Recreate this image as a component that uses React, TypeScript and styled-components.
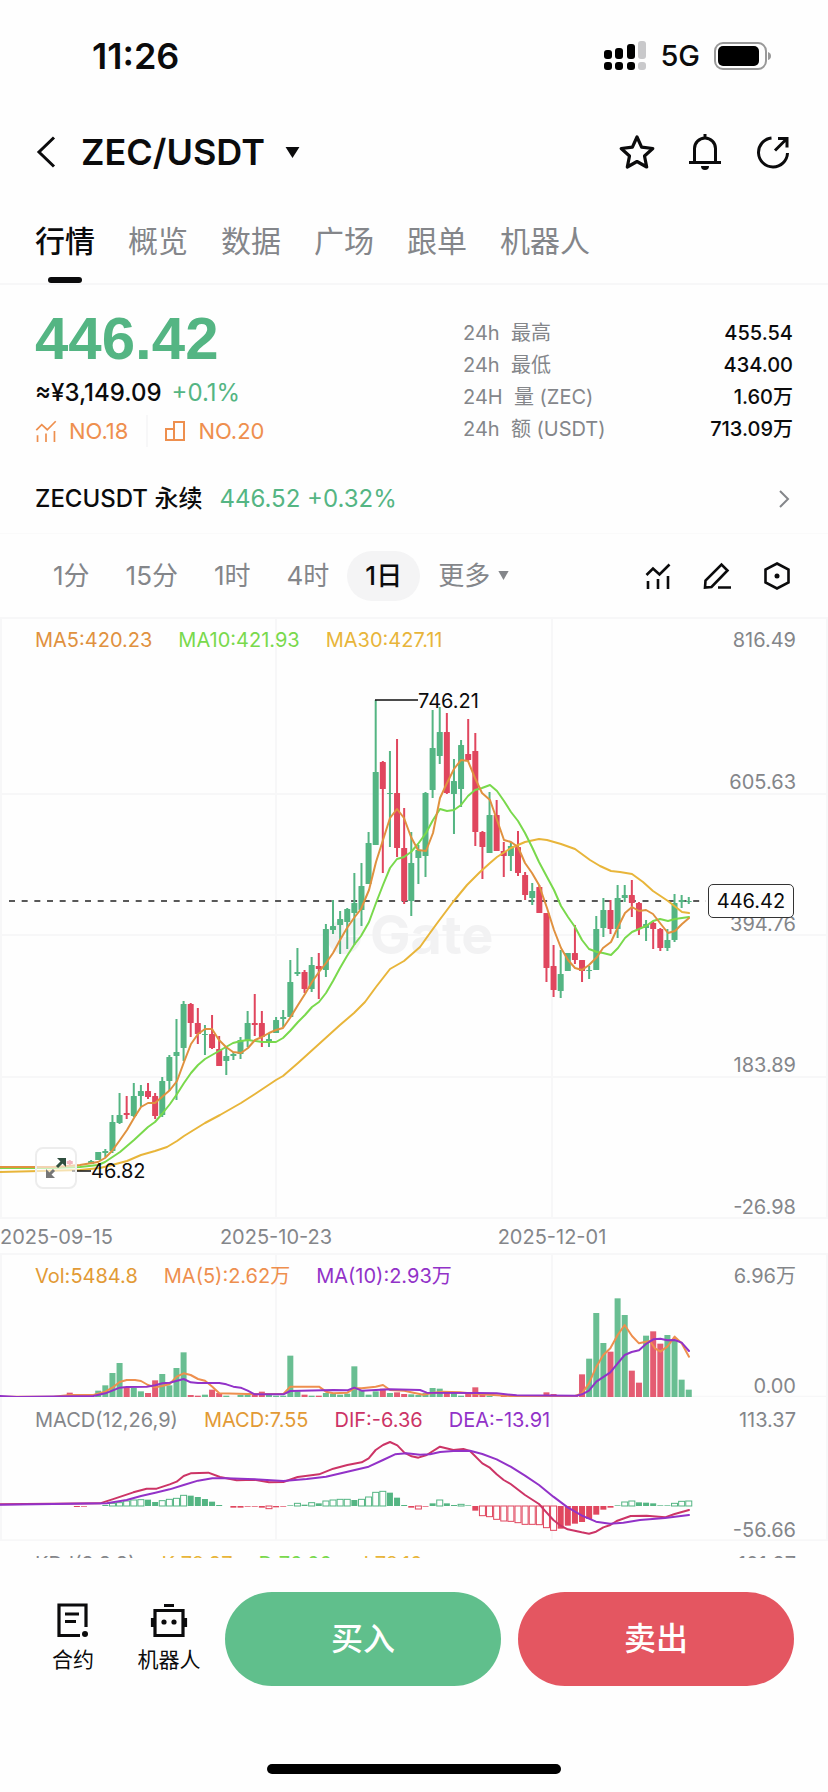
import React from "react";
import styled, { createGlobalStyle } from "styled-components";

const c = {
  ink: "#0b0b0c",
  muted: "#84868a",
  faint: "#f7f7f8",
  up: "#54b583",
  down: "#e0465e",
  orange: "#ee8f4e",
  ma5: "#e0913f",
  ma10: "#79d94c",
  ma30: "#e8b53a",
  vol: "#e29a35",
  dif: "#cc3466",
  dea: "#9232c8",
};

const GlobalStyle = createGlobalStyle`
  * { box-sizing: border-box; }
  body { margin: 0; background: #fefefe; color: ${c.ink};
    font-family: Inter, "Noto Sans CJK SC", "Liberation Sans", sans-serif; font-size: 20px; line-height: 32px; }
  button { font: inherit; color: inherit; background: none; border: 0; padding: 0; cursor: pointer; }
  a { color: inherit; text-decoration: none; }
  svg { display: block; flex: none; }
`;

const Page = styled.div`
  display: flex;
  flex-direction: column;
  min-height: 100vh;
`;

const StatusBar = styled.div`
  display: flex;
  align-items: center;
  justify-content: space-between;
  height: 112px;
  padding: 0 56px 0 92px;
`;
const Clock = styled.span`
  font-size: 36px;
  font-weight: 600;
`;
const StatusIcons = styled.div`
  display: flex;
  align-items: center;
  gap: 14px;
  font-size: 29px;
  font-weight: 500;
`;

const Header = styled.header`
  display: flex;
  align-items: center;
  justify-content: space-between;
  height: 80px;
  padding: 0 36px;
`;
const PairButton = styled.button`
  display: flex;
  align-items: center;
  gap: 20px;
`;
const Pair = styled.h1`
  margin: 0;
  font-size: 36px;
  line-height: 44px;
  font-weight: 600;
`;
const Group = styled.div<{ $gap: number }>`
  display: flex;
  align-items: center;
  gap: ${(p) => p.$gap}px;
`;
const IconButton = styled.button`
  display: grid;
  place-items: center;
`;

const Tabs = styled.nav`
  display: flex;
  gap: 33px;
  height: 93px;
  padding: 0 35px;
  border-bottom: 2px solid ${c.faint};
`;
const Tab = styled.a<{ $on?: boolean }>`
  display: flex;
  flex-direction: column;
  align-items: center;
  justify-content: space-between;
  padding-top: 29px;
  font-size: 30px;
  line-height: 40px;
  font-weight: ${(p) => (p.$on ? 500 : 400)};
  color: ${(p) => (p.$on ? c.ink : c.muted)};
  &::after {
    content: "";
    width: 34px;
    height: 6px;
    border-radius: 3px;
    background: ${(p) => (p.$on ? c.ink : "transparent")};
  }
`;

const Summary = styled.section`
  display: flex;
  justify-content: space-between;
  padding: 32px 35px 0;
  height: 179px;
`;
const Price = styled.div`
  font-family: "Liberation Sans", Arial, sans-serif;
  font-size: 60px;
  line-height: 44px;
  font-weight: 700;
  color: ${c.up};
`;
const Fiat = styled.div`
  display: flex;
  gap: 10px;
  margin-top: 16px;
  font-size: 24px;
  line-height: 32px;
  font-weight: 500;
`;
const Up = styled.span`
  color: ${c.up};
  font-weight: 400;
`;
const Ranks = styled.div`
  display: flex;
  align-items: center;
  margin-top: 6px;
  font-size: 22px;
  color: ${c.orange};
`;
const Rank = styled.a`
  display: flex;
  align-items: center;
  gap: 12px;
  & + & {
    margin-left: 18px;
    padding-left: 16px;
    border-left: 2px solid ${c.faint};
  }
`;
const Stats = styled.dl`
  display: grid;
  grid-template-columns: auto auto;
  justify-content: space-between;
  grid-auto-rows: 32px;
  width: 330px;
  margin: 0;
  dt { color: ${c.muted}; white-space: pre; }
  dd { margin: 0; text-align: right; font-weight: 500; }
`;

const Perp = styled.a`
  display: flex;
  align-items: center;
  height: 70px;
  padding: 0 38px 0 35px;
  font-size: 24px;
  font-weight: 500;
  border-bottom: 1px solid #fafafa;
  svg { margin-left: auto; }
  ${Up} { margin-left: 17px; }
`;

const Toolbar = styled.div`
  display: flex;
  align-items: center;
  justify-content: space-between;
  height: 83px;
  padding: 0 37px 0 35px;
`;
const Frame = styled.button<{ $on?: boolean }>`
  display: flex;
  align-items: center;
  gap: 8px;
  height: 50px;
  padding: 0 18px;
  border-radius: 25px;
  font-size: 26px;
  font-weight: ${(p) => (p.$on ? 500 : 400)};
  color: ${(p) => (p.$on ? c.ink : c.muted)};
  background: ${(p) => (p.$on ? "#f4f4f5" : "transparent")};
`;

const Panel = styled.section`
  position: relative;
  display: grid;
  > * { grid-area: 1 / 1; }
  > svg { width: 100%; height: auto; }
`;
const Overlay = styled.div`
  display: flex;
  justify-content: space-between;
  padding: 7px 32px 0 35px;
`;
const Legend = styled.div`
  display: flex;
  gap: 26px;
  height: 32px;
  white-space: nowrap;
`;
const Ink = styled.span<{ $c: string }>`
  color: ${(p) => p.$c};
`;
const Axis = styled.div<{ $end: number }>`
  display: flex;
  flex-direction: column;
  justify-content: space-between;
  text-align: right;
  color: ${c.muted};
  margin-bottom: ${(p) => p.$end}px;
`;
const PriceTag = styled.div`
  position: absolute;
  right: 34px;
  top: 44.4%;
  width: 86px;
  height: 34px;
  border: 1px solid #333;
  border-radius: 5px;
  background: #fefefe;
  text-align: center;
`;
const Expand = styled.button`
  position: absolute;
  left: 35px;
  top: 88%;
  width: 42px;
  height: 42px;
  display: grid;
  place-items: center;
  border: 2px solid #ededed;
  border-radius: 8px;
  background: rgba(255, 255, 255, 0.6);
`;
const Dates = styled.div`
  display: grid;
  grid-template-columns: 1fr 2fr 2fr 1fr;
  height: 34px;
  line-height: 36px;
  color: ${c.muted};
  text-align: center;
  white-space: nowrap;
  span:first-child { text-align: left; }
`;
const Clipped = styled.section`
  height: 17px;
  overflow: hidden;
`;

const Actions = styled.footer`
  display: flex;
  align-items: center;
  padding: 34px 34px 0 25px;
`;
const Shortcut = styled.a`
  display: flex;
  flex-direction: column;
  align-items: center;
  gap: 6px;
  width: 96px;
  font-size: 21px;
`;
const Trade = styled.button<{ $c: string }>`
  flex: 1;
  height: 94px;
  margin-left: 8px;
  border-radius: 47px;
  background: ${(p) => p.$c};
  color: #fff;
  font-size: 32px;
  font-weight: 500;
  & + & { margin-left: 17px; }
`;
const HomeBar = styled.div`
  width: 294px;
  height: 10px;
  margin: auto auto 18px;
  border-radius: 5px;
  background: #000;
`;

/* Candles sit on a fixed pitch; index 0 is the day of the 746.21 high. */
const STEP = 7.115;
const candleX = (k: number) => 375.7 + k * STEP;

/* [index, high, open/close top, open/close bottom, low, direction] */
type Candle = [number, number, number, number, number, 0 | 1];
const candles: Candle[] = [
  [-43, 1160, 1161, 1164, 1165, 0], [-40, 1160, 1161, 1164, 1164, 1],
  [-39, 1152, 1152, 1160, 1160, 1], [-38, 1149, 1151, 1153, 1157, 1], [-37, 1115, 1122, 1151, 1153, 1],
  [-36, 1093, 1115, 1123, 1124, 1], [-35, 1096, 1113, 1115, 1119, 0], [-34, 1083, 1096, 1116, 1117, 1],
  [-33, 1085, 1091, 1096, 1107, 1], [-32, 1083, 1091, 1097, 1099, 0], [-31, 1093, 1096, 1116, 1119, 0],
  [-30, 1077, 1081, 1115, 1117, 1], [-29, 1055, 1057, 1081, 1091, 1], [-28, 1019, 1052, 1056, 1100, 1],
  [-27, 1001, 1004, 1048, 1061, 1], [-26, 1003, 1004, 1023, 1037, 0], [-25, 1008, 1023, 1034, 1044, 0],
  [-24, 1025, 1034, 1035, 1055, 1], [-23, 1015, 1034, 1048, 1049, 0], [-22, 1036, 1049, 1066, 1066, 0],
  [-21, 1047, 1056, 1061, 1075, 1], [-20, 1052, 1054, 1056, 1060, 1], [-19, 1037, 1040, 1054, 1059, 1],
  [-18, 1011, 1023, 1040, 1047, 1], [-17, 994, 1023, 1025, 1036, 0], [-16, 1011, 1023, 1037, 1047, 0],
  [-15, 1033, 1039, 1042, 1047, 1], [-14, 1017, 1020, 1033, 1033, 1], [-13, 1010, 1017, 1019, 1027, 1],
  [-12, 960, 982, 1017, 1017, 1], [-11, 948, 972, 974, 976, 1], [-10, 970, 972, 989, 993, 0],
  [-9, 957, 965, 989, 992, 1], [-8, 953, 966, 969, 999, 0], [-7, 924, 929, 970, 977, 1],
  [-6, 900, 926, 930, 934, 1], [-5, 911, 919, 925, 954, 1], [-4, 908, 909, 922, 949, 1],
  [-3, 873, 903, 913, 945, 1], [-2, 863, 886, 910, 926, 1], [-1, 832, 843, 884, 884, 1],
  [0, 700, 772, 845, 845, 1], [1, 761, 762, 789, 873, 0], [2, 751, 793, 794, 847, 1],
  [3, 739, 793, 848, 857, 0], [4, 808, 848, 901, 904, 0], [5, 832, 863, 901, 916, 1],
  [6, 845, 850, 858, 884, 1], [7, 792, 793, 856, 877, 1], [8, 710, 748, 790, 798, 1],
  [9, 707, 732, 756, 764, 1], [10, 713, 732, 793, 794, 0], [11, 759, 781, 794, 834, 1],
  [12, 740, 745, 789, 807, 1], [13, 719, 754, 760, 761, 0], [14, 733, 751, 832, 846, 0],
  [15, 831, 832, 847, 879, 0], [16, 792, 815, 853, 853, 1], [17, 800, 815, 851, 851, 0],
  [18, 842, 851, 856, 877, 0], [19, 842, 846, 856, 871, 1], [20, 831, 847, 873, 876, 0],
  [21, 872, 875, 895, 900, 0], [22, 883, 891, 898, 905, 1], [23, 885, 887, 913, 913, 0],
  [24, 913, 913, 968, 982, 0], [25, 945, 966, 990, 997, 0], [26, 950, 974, 991, 998, 1],
  [27, 953, 953, 971, 971, 1], [28, 925, 953, 960, 964, 0], [29, 960, 960, 971, 982, 0],
  [30, 966, 970, 971, 979, 1], [31, 916, 929, 970, 970, 1], [32, 898, 910, 928, 937, 1],
  [33, 900, 910, 929, 934, 0], [34, 885, 898, 929, 938, 1], [35, 885, 895, 898, 902, 1],
  [36, 880, 895, 903, 917, 0], [37, 902, 903, 929, 935, 0], [38, 920, 924, 928, 941, 1],
  [39, 922, 923, 929, 949, 0], [40, 928, 929, 948, 951, 0], [41, 929, 940, 948, 951, 1],
  [42, 894, 903, 940, 942, 1], [43, 895, 900, 902, 908, 1], [44, 897, 901, 902, 904, 1],
];

const ma5 =
  "0,1167 53,1167 80,1165 98,1162 105,1158 112,1151 120,1140 127,1130 134,1118 141,1107 148,1103 155,1103 162,1097 170,1090 177,1081 184,1062 191,1044 198,1034 205,1029 212,1029 219,1040 226,1047 233,1052 241,1053 248,1048 255,1040 262,1037 269,1033 276,1030 283,1028 290,1018 298,1005 305,994 312,982 319,972 326,963 333,953 340,940 347,928 354,918 361,909 369,890 376,862 383,840 390,818 397,809 404,818 411,837 418,850 426,851 433,833 440,798 447,783 454,769 461,760 468,761 475,778 482,793 490,800 497,820 504,840 511,842 518,847 525,863 532,873 539,885 547,908 554,930 561,948 568,960 575,968 582,970 589,965 597,957 603,948 611,942 618,927 625,913 632,907 639,911 646,910 653,914 660,923 668,933 675,931 682,924 689,918";
const ma10 =
  "0,1168 53,1168 80,1167 98,1165 105,1162 120,1152 134,1140 148,1127 155,1122 162,1114 170,1104 177,1094 184,1083 191,1073 198,1065 205,1059 212,1055 219,1051 226,1047 233,1043 241,1041 248,1040 262,1042 276,1042 283,1038 290,1031 298,1022 305,1015 312,1007 319,1002 326,993 333,981 340,968 347,956 354,945 361,936 369,922 376,903 383,885 390,868 397,859 404,857 411,852 418,844 426,833 433,820 440,809 447,811 454,810 461,805 468,796 475,790 482,788 490,785 497,791 504,801 511,812 518,821 525,833 532,847 539,862 547,877 554,890 561,906 568,917 575,927 582,940 589,949 597,952 603,953 611,955 618,948 625,938 632,932 639,929 646,926 653,921 660,919 668,921 675,919 689,917";
const ma30 =
  "0,1172 40,1171 80,1170 100,1168 112,1165 127,1161 141,1155 155,1151 167,1147 177,1141 184,1136 205,1123 220,1115 241,1103 255,1094 276,1080 283,1076 298,1063 319,1044 340,1025 354,1013 365,1002 376,987 390,969 404,961 420,947 430,933 438,922 453,902 467,885 480,872 490,863 497,857 511,848 525,842 539,839 547,840 561,844 575,849 590,860 600,866 611,871 620,872 632,874 643,882 653,891 668,901 682,912 689,913";

/* Indicator panels are drawn in units of a third of a pixel. */
const UNIT = 3;
/* [index, height, direction] */
const volumes: [number, number, 0 | 1][] = [
  [-44, 5, 1], [-43, 13, 0], [-42, 4, 0], [-41, 5, 0], [-40, 5, 1],
  [-39, 19, 1], [-38, 35, 1], [-37, 72, 1], [-36, 102, 1], [-35, 30, 0], [-34, 27, 1], [-33, 17, 1], [-32, 12, 0],
  [-31, 50, 0], [-30, 69, 1], [-29, 35, 1], [-28, 87, 1], [-27, 134, 1], [-26, 6, 0], [-25, 4, 0], [-24, 7, 1],
  [-23, 22, 0], [-22, 12, 0], [-21, 4, 1], [-19, 6, 1], [-18, 7, 1], [-17, 7, 0], [-16, 16, 0], [-15, 10, 1],
  [-14, 4, 1], [-13, 4, 1], [-12, 124, 1], [-11, 17, 1], [-10, 7, 0], [-9, 4, 1], [-8, 4, 0], [-7, 12, 1],
  [-6, 10, 1], [-5, 7, 1], [-4, 10, 1], [-3, 92, 1], [-2, 20, 1], [-1, 7, 1], [0, 17, 1], [1, 25, 0], [2, 12, 1],
  [3, 14, 0], [4, 9, 0], [5, 8, 1], [6, 6, 1], [7, 12, 1], [8, 27, 1], [9, 25, 1], [10, 17, 0], [11, 12, 1],
  [12, 4, 1], [13, 13, 0], [14, 29, 0], [15, 8, 0], [16, 4, 1], [18, 5, 0], [24, 14, 0], [25, 9, 0], [26, 6, 0],
  [27, 6, 0], [28, 6, 0], [29, 68, 0], [30, 115, 1], [31, 252, 1], [32, 162, 1], [33, 136, 0], [34, 296, 1],
  [35, 246, 1], [36, 79, 0], [37, 43, 0], [38, 184, 1], [39, 197, 0], [40, 160, 0], [41, 186, 1], [42, 172, 1],
  [43, 52, 1], [44, 22, 1],
];
const volMa5 =
  "0,470 160,470 210,465 280,465 316,455 337,443 359,426 380,420 405,420 423,423 444,435 466,442 487,438 509,432 530,410 551,400 572,405 594,417 615,422 637,440 658,460 743,462 850,462 871,440 957,440 978,455 1000,460 1042,458 1063,445 1085,445 1127,440 1149,435 1170,450 1213,452 1240,458 1270,464 1300,458 1330,455 1380,457 1430,462 1530,468 1725,468 1746,460 1767,430 1789,380 1810,345 1831,325 1853,285 1874,255 1896,288 1917,310 1938,305 1950,303 1965,325 1981,335 2002,320 2024,290 2045,310 2067,350";
const volMa10 =
  "0,468 50,471 280,468 316,460 337,452 359,443 380,441 440,440 466,436 487,430 509,428 551,417 572,427 594,429 658,429 679,433 700,440 722,443 743,452 764,463 850,463 871,453 1000,450 1042,451 1063,443 1085,452 1170,448 1260,450 1280,458 1430,459 1490,460 1550,466 1730,467 1746,463 1767,452 1789,425 1831,397 1853,370 1874,345 1895,336 1917,331 1938,312 1960,298 1981,296 2002,301 2024,300 2045,308 2067,333";
const dif =
  "0,793 300,790 337,778 400,757 440,746 470,746 509,733 530,725 551,708 572,700 625,698 660,711 710,721 764,719 807,727 850,726 893,711 957,703 1000,686 1042,675 1085,667 1106,655 1127,630 1149,615 1170,606 1192,616 1213,638 1235,649 1255,653 1280,645 1320,620 1360,630 1390,627 1410,633 1447,670 1468,682 1490,703 1511,720 1532,732 1575,765 1617,792 1640,818 1660,840 1682,857 1703,868 1745,877 1767,881 1788,875 1810,862 1831,855 1850,843 1892,828 1940,827 1995,832 2024,822 2067,810";
const dea =
  "0,794 320,790 380,780 423,768 466,758 509,748 551,735 594,722 637,715 680,715 764,718 850,723 920,717 978,710 1042,695 1106,680 1149,660 1185,643 1220,640 1260,644 1290,643 1320,636 1360,633 1410,632 1447,642 1490,658 1532,680 1575,707 1617,735 1660,770 1703,802 1746,827 1788,845 1830,851 1870,848 1920,840 1995,834 2067,825";
/* [index, signed height, hollow] */
const histogram: [number, number, 0 | 1][] = [
  [-42, -3, 0], [-41, -2, 0], [-38, 3, 0], [-37, 8, 1], [-36, 10, 1], [-35, 15, 1], [-34, 18, 1], [-33, 19, 1],
  [-32, 19, 0], [-31, 12, 0], [-30, 16, 1], [-29, 20, 1], [-28, 23, 1], [-27, 32, 1], [-26, 31, 0], [-25, 27, 0],
  [-24, 21, 0], [-23, 13, 0], [-22, 3, 0], [-20, -5, 0], [-19, -5, 0], [-18, -2, 0], [-17, -2, 0], [-16, -5, 0],
  [-15, -8, 1], [-14, -4, 0], [-13, -2, 0], [-12, 2, 0], [-11, 8, 1], [-10, 4, 0], [-9, 10, 1], [-8, 8, 0],
  [-7, 15, 1], [-6, 18, 1], [-5, 20, 1], [-4, 20, 1], [-3, 18, 0], [-2, 20, 1], [-1, 27, 1], [0, 41, 1],
  [1, 44, 1], [2, 40, 0], [3, 25, 0], [4, 3, 0], [5, -5, 0], [6, -9, 1], [7, -2, 0], [8, 8, 0], [9, 18, 1],
  [10, 8, 0], [11, 3, 0], [12, 5, 1], [13, 2, 0], [14, -14, 0], [15, -29, 1], [16, -32, 1], [17, -40, 1],
  [18, -45, 1], [19, -46, 1], [20, -50, 1], [21, -55, 1], [22, -55, 1], [23, -56, 1], [24, -65, 1], [25, -73, 1],
  [26, -68, 0], [27, -59, 0], [28, -53, 0], [29, -48, 0], [30, -39, 0], [31, -26, 0], [32, -11, 0], [33, -5, 0],
  [34, 2, 0], [35, 12, 1], [36, 15, 1], [37, 11, 0], [38, 10, 0], [39, 8, 0], [40, 2, 0], [41, 2, 0],
  [42, 8, 1], [43, 14, 1], [44, 15, 1],
];

const tone = (d: number) => (d > 0 ? c.up : c.down);

function Line({ points, color, w }: { points: string; color: string; w: number }) {
  return <polyline points={points} fill="none" stroke={color} strokeWidth={w} strokeLinejoin="round" strokeLinecap="round" />;
}

function CandleChart() {
  return (
    <svg viewBox="0 617 828 602" role="img" aria-label="ZEC/USDT 日线">
      <path d="M0 618H828M0 794H828M0 935H828M0 1077H828M0 1218H828M1 617V1219M276 617V1219M552 617V1219M827 617V1219" stroke={c.faint} strokeWidth="2" />
      <g fill="#f2f2f3">
        <path d="M344 920A17 17 0 1 0 361 937H344Z" />
        <path d="M346 918H363V935H346Z" fill="#f6f6f7" />
        <text x="370" y="954" fontSize="54" fontWeight="700">Gate</text>
      </g>
      <path d="M9 901H706" stroke="#222" strokeWidth="1.5" strokeDasharray="6 6.67" />
      {candles.map(([k, hi, top, bottom, lo, d]) => (
        <g key={k} fill={tone(d)}>
          <rect x={candleX(k) - 1} y={hi} width="2" height={lo - hi} />
          <rect x={candleX(k) - 3} y={top} width="6" height={Math.max(bottom - top, 1)} rx="0.5" />
        </g>
      ))}
      <Line points={ma30} color={c.ma30} w={2} />
      <Line points={ma10} color={c.ma10} w={2} />
      <Line points={ma5} color={c.ma5} w={2} />
      <path d="M375 700H418M72 1171H91" stroke="#111" strokeWidth="1.7" />
      <g fontSize="20" fill={c.ink}>
        <text x="418" y="708">746.21</text>
        <text x="91" y="1178">46.82</text>
      </g>
    </svg>
  );
}

function VolumeChart() {
  return (
    <svg viewBox="0 39 2484 432" role="img" aria-label="成交量">
      <path d="M0 42H2484M0 470H2484M3 39V471M828 39V471M1656 39V471M2481 39V471" stroke={c.faint} strokeWidth="6" />
      {volumes.map(([k, h, d]) => (
        <rect key={k} x={candleX(k) * UNIT - 9} y={471 - h} width="18" height={h} fill={tone(d)} opacity="0.88" />
      ))}
      <Line points={volMa5} color={c.orange} w={6} />
      <Line points={volMa10} color={c.dea} w={6} />
    </svg>
  );
}

function MacdChart() {
  return (
    <svg viewBox="0 471 2484 432" role="img" aria-label="MACD">
      <path d="M0 901H2484M3 471V903M828 471V903M1656 471V903M2481 471V903" stroke={c.faint} strokeWidth="6" />
      {histogram.map(([k, h, hollow]) => (
        <rect
          key={k}
          x={candleX(k) * UNIT - 9}
          y={798 - Math.max(h, 0)}
          width="18"
          height={Math.abs(h)}
          fill={hollow ? "#fefefe" : tone(h)}
          stroke={hollow ? tone(h) : "none"}
          strokeWidth="3"
        />
      ))}
      <Line points={dif} color={c.dif} w={6} />
      <Line points={dea} color={c.dea} w={6} />
    </svg>
  );
}

function Caret({ w, h }: { w: number; h: number }) {
  return (
    <svg width={w} height={h} viewBox="0 0 14 10" preserveAspectRatio="none" aria-hidden="true">
      <path d="M0.5 0H13.5L7 10Z" fill="currentColor" />
    </svg>
  );
}

function TrendIcon({ size, stroke }: { size: number; stroke: number }) {
  return (
    <svg width={size} height={size} viewBox="0 0 26 26" fill="none" stroke="currentColor" strokeWidth={stroke} aria-hidden="true">
      <path d="M1.5 12L8 5.5L14.5 11.5L24.500 1.500M3 18V26M13 16V26M23 13V26" />
    </svg>
  );
}

const tabs = ["行情", "概览", "数据", "广场", "跟单", "机器人"];
const frames = ["1分", "15分", "1时", "4时", "1日"];
const stats = [
  ["24h  最高", "455.54"],
  ["24h  最低", "434.00"],
  ["24H  量 (ZEC)", "1.60万"],
  ["24h  额 (USDT)", "713.09万"],
];

export default function App() {
  return (
    <Page>
      <GlobalStyle />
      <StatusBar>
        <Clock>11:26</Clock>
        <StatusIcons>
          <svg width="42" height="30" viewBox="0 0 42 30" aria-hidden="true">
            <g fill="#000">
              <rect x="0" y="9" width="8" height="9" rx="3" />
              <rect x="11" y="7" width="8" height="11" rx="3" />
              <rect x="23" y="3" width="8" height="15" rx="3" />
              <rect x="0" y="21" width="8" height="8" rx="3" />
              <rect x="11" y="21" width="8" height="8" rx="3" />
              <rect x="23" y="21" width="8" height="8" rx="3" />
            </g>
            <g fill="#c9c9cb">
              <rect x="34" y="0" width="8" height="18" rx="3" />
              <rect x="34" y="21" width="8" height="8" rx="3" />
            </g>
          </svg>
          <span>5G</span>
          <svg width="58" height="28" viewBox="0 0 58 28" aria-hidden="true">
            <rect x="1" y="1" width="51" height="26" rx="8" fill="none" stroke="#999" strokeWidth="2" />
            <rect x="4" y="4" width="41" height="20" rx="5" fill="#000" />
            <path d="M54 10Q57 11 57 14T54 18Z" fill="#999" />
          </svg>
        </StatusIcons>
      </StatusBar>

      <Header>
        <Group $gap={25}>
          <IconButton aria-label="返回">
            <svg width="20" height="32" viewBox="0 0 20 32" fill="none" stroke="currentColor" strokeWidth="3">
              <path d="M18 1.500L3 16L18 30.500" />
            </svg>
          </IconButton>
          <PairButton>
            <Pair>ZEC/USDT</Pair>
            <Caret w={15} h={11} />
          </PairButton>
        </Group>
        <Group $gap={30}>
          <IconButton aria-label="收藏">
            <svg width="38" height="38" viewBox="0 0 38 38" fill="none" stroke="currentColor" strokeWidth="3.2" strokeLinejoin="round">
              <path d="M19 4L23.600 14.200L34.800 15.500L26.500 23L28.700 34L19 28.500L9.300 34L11.500 23L3.200 15.500L14.400 14.200Z" />
            </svg>
          </IconButton>
          <IconButton aria-label="提醒">
            <svg width="38" height="38" viewBox="0 0 38 38" fill="none" stroke="currentColor" strokeWidth="3">
              <path d="M3 29.500H35M8.500 29V15.500A10.500 10.500 0 0 1 29.500 15.500V29M19 1V5" />
              <path d="M15 33H23A4 4 0 0 1 15 33Z" fill="currentColor" stroke="none" />
            </svg>
          </IconButton>
          <IconButton aria-label="分享">
            <svg width="38" height="38" viewBox="0 0 38 38" fill="none" stroke="currentColor" strokeWidth="3">
              <path d="M17.500 5A14.500 14.500 0 1 0 33.500 20M21 17.500L32.500 6M24 5.500H33V14.500" />
            </svg>
          </IconButton>
        </Group>
      </Header>

      <Tabs>
        {tabs.map((t, i) => (
          <Tab key={t} href="#" $on={i === 0}>{t}</Tab>
        ))}
      </Tabs>

      <Summary>
        <div>
          <Price>446.42</Price>
          <Fiat>
            <span>≈¥3,149.09</span>
            <Up>+0.1%</Up>
          </Fiat>
          <Ranks>
            <Rank href="#">
              <TrendIcon size={22} stroke={2} />
              NO.18
            </Rank>
            <Rank href="#">
              <svg width="22" height="22" viewBox="0 0 22 22" fill="none" stroke="currentColor" strokeWidth="2" aria-hidden="true">
                <path d="M10 20V2H20V20H2V9H10" />
              </svg>
              NO.20
            </Rank>
          </Ranks>
        </div>
        <Stats>
          {stats.map(([k, v]) => (
            <React.Fragment key={k}>
              <dt>{k}</dt>
              <dd>{v}</dd>
            </React.Fragment>
          ))}
        </Stats>
      </Summary>

      <Perp href="#">
        ZECUSDT 永续 <Up>446.52 +0.32%</Up>
        <svg width="12" height="18" viewBox="0 0 12 18" fill="none" stroke={c.muted} strokeWidth="2" aria-hidden="true">
          <path d="M2 1L10 9L2 17" />
        </svg>
      </Perp>

      <Toolbar>
        <Group $gap={0}>
          {frames.map((f) => (
            <Frame key={f} $on={f === "1日"}>{f}</Frame>
          ))}
          <Frame>
            更多
            <Caret w={11} h={9} />
          </Frame>
        </Group>
        <Group $gap={32}>
          <IconButton aria-label="指标">
            <TrendIcon size={26} stroke={2.6} />
          </IconButton>
          <IconButton aria-label="画线">
            <svg width="28" height="28" viewBox="0 0 28 28" fill="none" stroke="currentColor" strokeWidth="2.6">
              <path d="M2 25.500L2.500 18.500L18.500 2.500L24.500 8.500L8.500 25Z M15 25.500H28" />
            </svg>
          </IconButton>
          <IconButton aria-label="设置">
            <svg width="28" height="28" viewBox="0 0 28 28" fill="none" stroke="currentColor" strokeWidth="2.6">
              <path d="M14 1.500L25.500 7.500V20.500L14 26.500L2.500 20.500V7.500Z" />
              <circle cx="14" cy="14" r="2.500" fill="currentColor" stroke="none" />
            </svg>
          </IconButton>
        </Group>
      </Toolbar>

      <Panel>
        <CandleChart />
        <Overlay>
          <Legend>
            <Ink $c={c.ma5}>MA5:420.23</Ink>
            <Ink $c={c.ma10}>MA10:421.93</Ink>
            <Ink $c={c.ma30}>MA30:427.11</Ink>
          </Legend>
          <Axis $end={-4}>
            <span>816.49</span>
            <span>605.63</span>
            <span>394.76</span>
            <span>183.89</span>
            <span>-26.98</span>
          </Axis>
        </Overlay>
        <PriceTag>446.42</PriceTag>
        <Expand aria-label="全屏">
          <svg width="22" height="22" viewBox="0 0 22 22" fill="none" strokeWidth="3" aria-hidden="true">
            <path d="M12 10L19 3" stroke="#2f4f3f" />
            <path d="M12 1H21V10Z" fill="#2f4f3f" />
            <path d="M9 13L3 19" stroke="#777" />
            <path d="M1 12V21H10Z" fill="#777" />
          </svg>
        </Expand>
      </Panel>
      <Dates>
        <span>2025-09-15</span>
        <span>2025-10-23</span>
        <span>2025-12-01</span>
      </Dates>

      <Panel>
        <VolumeChart />
        <Overlay>
          <Legend>
            <Ink $c={c.vol}>Vol:5484.8</Ink>
            <Ink $c={c.orange}>MA(5):2.62万</Ink>
            <Ink $c={c.dea}>MA(10):2.93万</Ink>
          </Legend>
          <Axis $end={-5}>
            <span>6.96万</span>
            <span>0.00</span>
          </Axis>
        </Overlay>
      </Panel>

      <Panel>
        <MacdChart />
        <Overlay>
          <Legend>
            <Ink $c={c.muted}>MACD(12,26,9)</Ink>
            <Ink $c={c.vol}>MACD:7.55</Ink>
            <Ink $c={c.dif}>DIF:-6.36</Ink>
            <Ink $c={c.dea}>DEA:-13.91</Ink>
          </Legend>
          <Axis $end={-5}>
            <span>113.37</span>
            <span>-56.66</span>
          </Axis>
        </Overlay>
      </Panel>

      <Clipped>
        <Overlay>
          <Legend>
            <Ink $c={c.muted}>KDJ(9,3,3)</Ink>
            <Ink $c={c.ma30}>K:78.37</Ink>
            <Ink $c={c.ma10}>D:76.66</Ink>
            <Ink $c={c.ma30}>J:78.16</Ink>
          </Legend>
          <Ink $c={c.muted}>101.27</Ink>
        </Overlay>
      </Clipped>

      <Actions>
        <Shortcut href="#">
          <svg width="34" height="36" viewBox="0 0 34 36" fill="none" stroke="currentColor" strokeWidth="3.2" aria-hidden="true">
            <path d="M24 33.500H3V3H30V25M9 12H23M9 19.500H20" />
            <circle cx="29" cy="32" r="3" fill="currentColor" stroke="none" />
          </svg>
          合约
        </Shortcut>
        <Shortcut href="#">
          <svg width="38" height="36" viewBox="0 0 38 36" fill="none" stroke="currentColor" strokeWidth="3.2" aria-hidden="true">
            <path d="M5 8.500H33V33.500H5ZM14 3.500H24M2.500 16V25M35.500 16V25" />
            <circle cx="14" cy="20" r="2.600" fill="currentColor" stroke="none" />
            <circle cx="24" cy="20" r="2.600" fill="currentColor" stroke="none" />
          </svg>
          机器人
        </Shortcut>
        <Trade $c="#60bf8c">买入</Trade>
        <Trade $c="#e45661">卖出</Trade>
      </Actions>
      <HomeBar />
    </Page>
  );
}
